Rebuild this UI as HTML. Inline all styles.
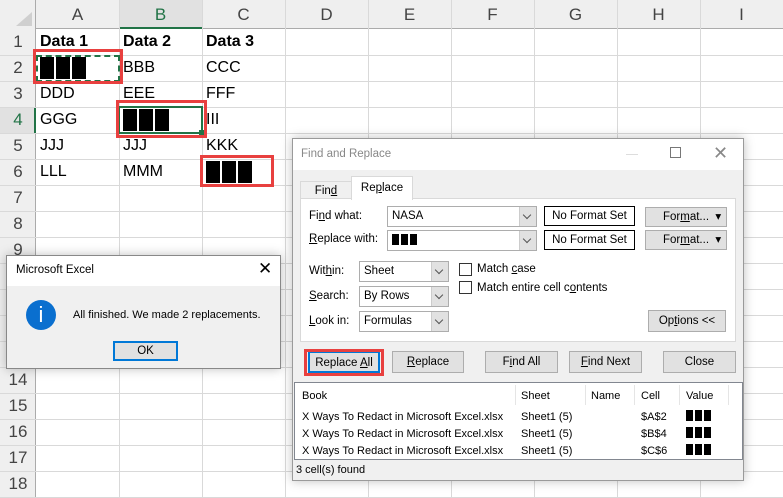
<!DOCTYPE html>
<html><head><meta charset="utf-8"><style>
*{box-sizing:border-box;margin:0;padding:0}
body{width:783px;height:498px;overflow:hidden;background:#fff;font-family:"Liberation Sans",sans-serif;position:relative}
.a{position:absolute}
.hl{position:absolute;left:0;width:783px;height:1px;background:#d9d9d9}
.vl{position:absolute;top:0;width:1px;height:498px;background:#d9d9d9}
.ch{position:absolute;top:0;height:29px;width:83px;text-align:center;font-size:17px;line-height:29px;color:#444}
.rh{position:absolute;left:0;width:36px;height:26px;text-align:center;font-size:17px;line-height:26px;color:#444}
.c{position:absolute;font-size:16px;line-height:26px;color:#000;height:26px}
.blk{display:inline-block;width:14px;height:22px;background:#000;margin-right:2px;vertical-align:middle}
.sb{display:inline-block;width:7px;height:11px;background:#000;margin-right:2px;vertical-align:middle}
.red{position:absolute;border:3px solid #e8403f}
.d{font-size:11.5px;color:#000}
.btn{position:absolute;height:22px;background:#e1e1e1;border:1px solid #adadad;text-align:center;font-size:11.5px;line-height:20px}
.inp{position:absolute;background:#fff;border:1px solid #adadad;height:21px;font-size:11.5px;line-height:19px;padding-left:4px}
.dd{position:absolute;right:0;top:0;width:17px;height:19px;background:#e1e1e1;border-left:1px solid #ccc}
.dd:after{content:"";position:absolute;left:4px;top:5px;width:5px;height:5px;border-right:1px solid #555;border-bottom:1px solid #555;transform:rotate(45deg)}
.cb{position:absolute;width:13px;height:13px;border:1px solid #333;background:#fff}
.r{font-size:11px}
u{text-decoration:underline}
</style></head><body>
<div class="a" style="left:0;top:0;width:783px;height:29px;background:#efefef;border-bottom:1px solid #ababab"></div>
<div class="a" style="left:0;top:0;width:36px;height:498px;background:#efefef;border-right:1px solid #ababab"></div>
<div class="a" style="left:119px;top:0;width:83px;height:29px;background:#e1e1e1;border-bottom:2px solid #217346"></div>
<div class="a" style="left:0;top:107px;width:36px;height:26px;background:#e1e1e1;border-right:2px solid #217346"></div>
<div class="a" style="left:16px;top:12px;width:0;height:0;border-left:16px solid transparent;border-bottom:14px solid #cfcfcf"></div>
<div class="ch" style="left:36px">A</div><div class="ch" style="left:119px;color:#217346">B</div><div class="ch" style="left:202px">C</div><div class="ch" style="left:285px">D</div><div class="ch" style="left:368px">E</div><div class="ch" style="left:451px">F</div><div class="ch" style="left:534px">G</div><div class="ch" style="left:617px">H</div><div class="ch" style="left:700px">I</div>
<div class="hl" style="top:55px"></div><div class="hl" style="top:81px"></div><div class="hl" style="top:107px"></div><div class="hl" style="top:133px"></div><div class="hl" style="top:159px"></div><div class="hl" style="top:185px"></div><div class="hl" style="top:211px"></div><div class="hl" style="top:237px"></div><div class="hl" style="top:263px"></div><div class="hl" style="top:289px"></div><div class="hl" style="top:315px"></div><div class="hl" style="top:341px"></div><div class="hl" style="top:367px"></div><div class="hl" style="top:393px"></div><div class="hl" style="top:419px"></div><div class="hl" style="top:445px"></div><div class="hl" style="top:471px"></div><div class="hl" style="top:497px"></div>
<div class="vl" style="left:119px"></div><div class="vl" style="left:202px"></div><div class="vl" style="left:285px"></div><div class="vl" style="left:368px"></div><div class="vl" style="left:451px"></div><div class="vl" style="left:534px"></div><div class="vl" style="left:617px"></div><div class="vl" style="left:700px"></div>
<div class="rh" style="top:29px">1</div><div class="rh" style="top:55px">2</div><div class="rh" style="top:81px">3</div><div class="rh" style="top:107px;color:#217346">4</div><div class="rh" style="top:133px">5</div><div class="rh" style="top:159px">6</div><div class="rh" style="top:185px">7</div><div class="rh" style="top:211px">8</div><div class="rh" style="top:237px">9</div><div class="rh" style="top:367px">14</div><div class="rh" style="top:393px">15</div><div class="rh" style="top:419px">16</div><div class="rh" style="top:445px">17</div><div class="rh" style="top:471px">18</div>
<div class="c" style="left:40px;top:29px;font-weight:bold">Data 1</div>
<div class="c" style="left:123px;top:29px;font-weight:bold">Data 2</div>
<div class="c" style="left:206px;top:29px;font-weight:bold">Data 3</div>
<div class="c" style="left:40px;top:55px"><span class="blk"></span><span class="blk"></span><span class="blk"></span></div>
<div class="a" style="left:36px;top:55px;width:84px;height:27px;border:2px dashed #217346"></div>
<div class="c" style="left:123px;top:55px">BBB</div><div class="c" style="left:206px;top:55px">CCC</div>
<div class="c" style="left:40px;top:81px">DDD</div><div class="c" style="left:123px;top:81px">EEE</div><div class="c" style="left:206px;top:81px">FFF</div>
<div class="c" style="left:40px;top:107px">GGG</div><div class="c" style="left:123px;top:107px"><span class="blk"></span><span class="blk"></span><span class="blk"></span></div><div class="c" style="left:206px;top:107px">III</div>
<div class="a" style="left:118px;top:106px;width:85px;height:28px;border:2px solid #217346"></div>
<div class="a" style="left:199px;top:130px;width:5px;height:5px;background:#217346"></div>
<div class="c" style="left:40px;top:133px">JJJ</div><div class="c" style="left:123px;top:133px">JJJ</div><div class="c" style="left:206px;top:133px">KKK</div>
<div class="c" style="left:40px;top:159px">LLL</div><div class="c" style="left:123px;top:159px">MMM</div><div class="c" style="left:206px;top:159px"><span class="blk"></span><span class="blk"></span><span class="blk"></span></div>
<div class="red" style="left:33px;top:49px;width:90px;height:35px"></div>
<div class="red" style="left:116px;top:100px;width:91px;height:38px"></div>
<div class="red" style="left:200px;top:155px;width:74px;height:32px"></div>

<div class="a d" style="left:292px;top:138px;width:452px;height:343px;background:#f0f0f0;border:1px solid #9a9a9a;box-shadow:0 0 10px rgba(0,0,0,.25)">
 <div class="a" style="left:0;top:0;width:450px;height:31px;background:#fff"></div>
 <div class="a" style="left:8px;top:9px;font-size:11.5px;color:#888">Find and Replace</div>
 <div class="a" style="left:333px;top:15px;width:12px;height:1px;background:#ddd"></div>
 <div class="a" style="left:377px;top:8px;width:11px;height:11px;border:1px solid #777"></div>
 <div class="a" style="left:420px;top:4px;font-size:18px;color:#888">✕</div>
 <div class="a" style="left:7px;top:59px;width:436px;height:144px;background:#fff;border:1px solid #d9d9d9"></div>
 <div class="a" style="left:7px;top:42px;width:52px;height:18px;border:1px solid #d9d9d9;border-bottom:none;text-align:center;line-height:18px">Fin<u>d</u></div>
 <div class="a" style="left:58px;top:37px;width:62px;height:24px;background:#fff;border:1px solid #d9d9d9;border-bottom:none;text-align:center;line-height:22px">Re<u>p</u>lace</div>
 <div class="a" style="left:16px;top:71px">Fi<u>n</u>d what:</div>
 <div class="a" style="left:16px;top:94px"><u>R</u>eplace with:</div>
 <div class="inp" style="left:94px;top:67px;width:150px">NASA<span class="dd"></span></div>
 <div class="inp" style="left:94px;top:91px;width:150px"><span class="sb"></span><span class="sb"></span><span class="sb"></span><span class="dd"></span></div>
 <div class="a" style="left:251px;top:67px;width:91px;height:20px;border:1px solid #000;background:#fff;text-align:center;line-height:18px">No Format Set</div>
 <div class="a" style="left:251px;top:91px;width:91px;height:20px;border:1px solid #000;background:#fff;text-align:center;line-height:18px">No Format Set</div>
 <div class="btn" style="left:352px;top:68px;width:82px;height:20px;line-height:18px;text-align:left;padding-left:17px">For<u>m</u>at...&nbsp; ▾</div>
 <div class="btn" style="left:352px;top:91px;width:82px;height:20px;line-height:18px;text-align:left;padding-left:17px">For<u>m</u>at...&nbsp; ▾</div>
 <div class="a" style="left:16px;top:126px">Wit<u>h</u>in:</div>
 <div class="a" style="left:16px;top:151px"><u>S</u>earch:</div>
 <div class="a" style="left:16px;top:176px"><u>L</u>ook in:</div>
 <div class="inp" style="left:66px;top:122px;width:90px">Sheet<span class="dd"></span></div>
 <div class="inp" style="left:66px;top:147px;width:90px">By Rows<span class="dd"></span></div>
 <div class="inp" style="left:66px;top:172px;width:90px">Formulas<span class="dd"></span></div>
 <div class="cb" style="left:166px;top:124px"></div><div class="a" style="left:184px;top:124px">Match <u>c</u>ase</div>
 <div class="cb" style="left:166px;top:142px"></div><div class="a" style="left:184px;top:143px">Match entire cell c<u>o</u>ntents</div>
 <div class="btn" style="left:355px;top:171px;width:78px">Op<u>t</u>ions &lt;&lt;</div>
 <div class="btn" style="left:15px;top:212px;width:72px;border:2px solid #0078d7">Replace <u>A</u>ll</div>
 <div class="btn" style="left:99px;top:212px;width:72px"><u>R</u>eplace</div>
 <div class="btn" style="left:192px;top:212px;width:73px">F<u>i</u>nd All</div>
 <div class="btn" style="left:276px;top:212px;width:73px"><u>F</u>ind Next</div>
 <div class="btn" style="left:370px;top:212px;width:73px">Close</div>
 <div class="a" style="left:11px;top:210px;width:80px;height:27px;border:3px solid #e8403f"></div>
 <div class="a" style="left:1px;top:243px;width:449px;height:78px;background:#fff;border:1px solid #828790"></div>
 <div class="a r" style="left:9px;top:251px">Book</div><div class="a r" style="left:228px;top:251px">Sheet</div><div class="a r" style="left:298px;top:251px">Name</div><div class="a r" style="left:348px;top:251px">Cell</div><div class="a r" style="left:393px;top:251px">Value</div>
 <div class="a" style="left:222px;top:246px;width:1px;height:20px;background:#e5e5e5"></div><div class="a" style="left:292px;top:246px;width:1px;height:20px;background:#e5e5e5"></div><div class="a" style="left:341px;top:246px;width:1px;height:20px;background:#e5e5e5"></div><div class="a" style="left:386px;top:246px;width:1px;height:20px;background:#e5e5e5"></div><div class="a" style="left:435px;top:246px;width:1px;height:20px;background:#e5e5e5"></div>
 <div class="a r" style="left:9px;top:272px">X Ways To Redact in Microsoft Excel.xlsx</div><div class="a r" style="left:228px;top:272px">Sheet1 (5)</div><div class="a r" style="left:348px;top:272px">$A$2</div><div class="a" style="left:393px;top:271px"><span class="sb"></span><span class="sb"></span><span class="sb"></span></div>
 <div class="a r" style="left:9px;top:289px">X Ways To Redact in Microsoft Excel.xlsx</div><div class="a r" style="left:228px;top:289px">Sheet1 (5)</div><div class="a r" style="left:348px;top:289px">$B$4</div><div class="a" style="left:393px;top:288px"><span class="sb"></span><span class="sb"></span><span class="sb"></span></div>
 <div class="a r" style="left:9px;top:306px">X Ways To Redact in Microsoft Excel.xlsx</div><div class="a r" style="left:228px;top:306px">Sheet1 (5)</div><div class="a r" style="left:348px;top:306px">$C$6</div><div class="a" style="left:393px;top:305px"><span class="sb"></span><span class="sb"></span><span class="sb"></span></div>
 <div class="a r" style="left:3px;top:325px">3 cell(s) found</div>
</div>

<div class="a" style="left:6px;top:255px;width:275px;height:114px;background:#f0f0f0;border:1px solid #888;box-shadow:0 0 10px rgba(0,0,0,.25)">
 <div class="a" style="left:0;top:0;width:273px;height:30px;background:#fff"></div>
 <div class="a" style="left:9px;top:8px;font-size:11.5px">Microsoft Excel</div>
 <div class="a" style="left:251px;top:3px;font-size:17px">✕</div>
 <div class="a" style="left:19px;top:44px;width:30px;height:30px;border-radius:50%;background:#0a6fcf;color:#fff;text-align:center;font-size:22px;line-height:30px">i</div>
 <div class="a" style="left:66px;top:53px;font-size:11px">All finished. We made 2 replacements.</div>
 <div class="a" style="left:106px;top:85px;width:65px;height:20px;background:#e1e1e1;border:2px solid #0078d7;text-align:center;font-size:11.5px;line-height:16px">OK</div>
</div>
</body></html>
